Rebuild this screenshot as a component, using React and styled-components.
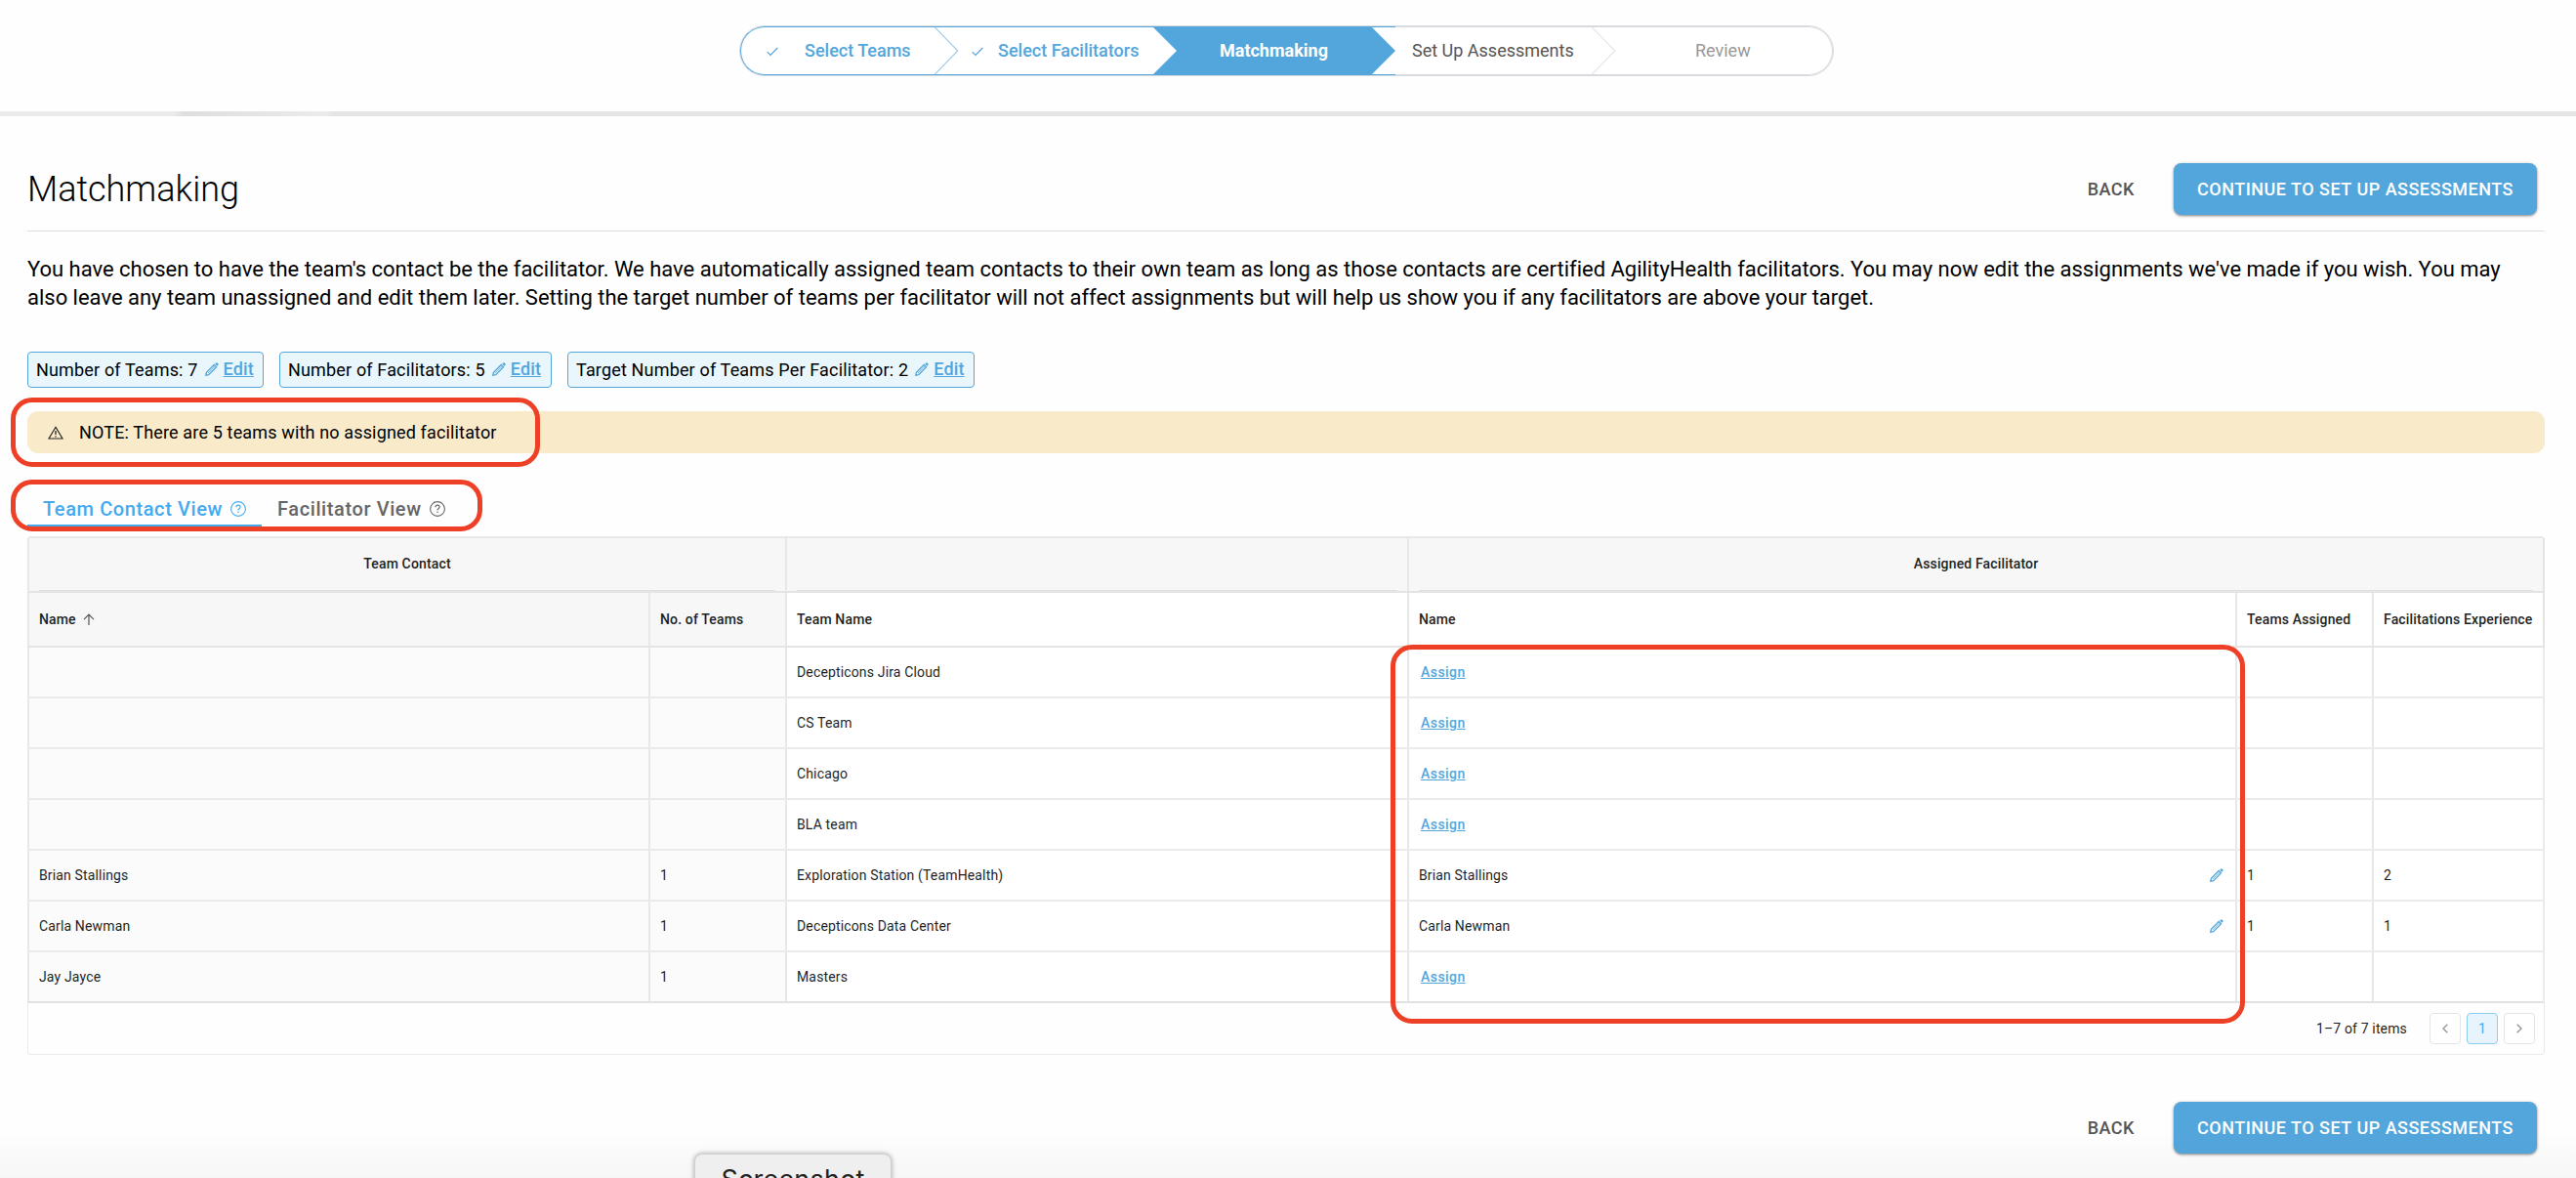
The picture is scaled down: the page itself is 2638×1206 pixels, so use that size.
import React from "react";
import styled, { createGlobalStyle } from "styled-components";

const blue = "#53a6dc";
const red = "#ee4026";

const steps = [
  { label: "Select Teams", state: "done", next: "#fff", width: 223, inset: 65, check: 26 },
  { label: "Select Facilitators", state: "done", next: blue, width: 224, inset: 41, check: 14 },
  { label: "Matchmaking", state: "active", next: "#fff", width: 224, inset: 44 },
  { label: "Set Up Assessments", state: "todo", next: "#fff", width: 225, inset: 17 },
  { label: "Review", state: "last", width: 223, inset: 82 },
];

const chips = [
  { text: "Number of Teams: 7", width: 242, gap: 16 },
  { text: "Number of Facilitators: 5", width: 279, gap: 16 },
  { text: "Target Number of Teams Per Facilitator: 2", width: 417, gap: 0 },
];

const rows = [
  { team: "Decepticons Jira Cloud" },
  { team: "CS Team" },
  { team: "Chicago" },
  { team: "BLA team" },
  {
    contact: "Brian Stallings",
    teams: 1,
    team: "Exploration Station (TeamHealth)",
    facilitator: "Brian Stallings",
    assigned: 1,
    experience: 2,
  },
  {
    contact: "Carla Newman",
    teams: 1,
    team: "Decepticons Data Center",
    facilitator: "Carla Newman",
    assigned: 1,
    experience: 1,
  },
  { contact: "Jay Jayce", teams: 1, team: "Masters" },
];

function Pencil() {
  return (
    <svg width="14" height="14" viewBox="0 0 14 14" fill="none" stroke={blue}>
      <path d="M.8 13.2 1.4 10.3 9.2 2.5 11.5 4.8 3.7 12.6Z" strokeWidth="1.3" />
      <path d="M3 11 9.9 4.1" strokeWidth=".7" />
      <path d="M10.2 1.6 11.4.4Q12 0 12.6.5L13.5 1.4Q14 2 13.5 2.6L12.3 3.8Z" fill={blue} stroke="none" />
    </svg>
  );
}

function Help() {
  return (
    <svg width="16" height="16" viewBox="0 0 16 16" fill="none" stroke="currentColor">
      <circle cx="8" cy="8" r="7.4" strokeWidth="1.1" />
      <path d="M5.9 6.2Q5.9 4.2 8 4.2T10.1 6.1Q10.1 7.1 9 7.8T8 9.5" strokeWidth="1.2" />
      <path d="M8 10.8V12.1" strokeWidth="1.3" />
    </svg>
  );
}

function Check() {
  return (
    <svg width="12" height="10" viewBox="0 0 12 10" fill="none" stroke={blue}>
      <path d="M.7 5.2 4 8.5 11.3 1" strokeWidth="1.2" />
    </svg>
  );
}

function StepEdge({ state, next }) {
  const fill = state === "active" ? blue : "#fff";
  const line = state === "done" ? "#a3cdea" : state === "todo" ? "#e4e6e8" : "none";
  return (
    <Edge width="25" height="48" viewBox="0 0 25 48">
      <path d="M0 0H25V48H0Z" fill={next} />
      <path d="M0 0 24 24 0 48Z" fill={fill} />
      <path d="M.4 0 23.8 24 .4 48" fill="none" stroke={next === blue ? "none" : line} strokeWidth="1.2" />
    </Edge>
  );
}

function Actions() {
  return (
    <ActionGroup>
      <BackButton>BACK</BackButton>
      <ContinueButton>CONTINUE TO SET UP ASSESSMENTS</ContinueButton>
    </ActionGroup>
  );
}

function App() {
  return (
    <Page>
      <GlobalStyle />
      <Header>
        <Stepper>
          {steps.map((s) => (
            <Step key={s.label} $state={s.state} $width={s.width} $inset={s.inset}>
              {s.check && (
                <CheckSlot $left={s.check}>
                  <Check />
                </CheckSlot>
              )}
              <StepLabel>{s.label}</StepLabel>
              {s.next && <StepEdge state={s.state} next={s.next} />}
            </Step>
          ))}
        </Stepper>
      </Header>
      <HeaderLine />

      <Content>
        <TitleRow>
          <Title>Matchmaking</Title>
          <Actions />
        </TitleRow>

        <Intro>
          You have chosen to have the team's contact be the facilitator. We have automatically assigned team contacts to
          their own team as long as those contacts are certified AgilityHealth facilitators. You may now edit the
          assignments we've made if you wish. You may
          <br />
          also leave any team unassigned and edit them later. Setting the target number of teams per facilitator will not
          affect assignments but will help us show you if any facilitators are above your target.
        </Intro>

        <Chips>
          {chips.map((c) => (
            <Chip key={c.text} $width={c.width} $gap={c.gap}>
              <span>{c.text}</span>
              <Pencil />
              <EditLink>Edit</EditLink>
            </Chip>
          ))}
        </Chips>

        <Note>
          <svg width="16" height="14" viewBox="0 0 16 14" fill="none" stroke="#222">
            <path d="M8 1.3 15 13H1Z" strokeWidth="1.2" />
            <path d="M8 5V9M8 10.2V11.6" strokeWidth="1.3" />
          </svg>
          NOTE: There are 5 teams with no assigned facilitator
          <Highlight $left={-17} $top={-14} $width={542} $height={71} />
        </Note>

        <Tabs>
          <Tab $active $width={240}>
            Team Contact View <Help />
          </Tab>
          <Tab $width={200}>
            Facilitator View <Help />
          </Tab>
          <Highlight $left={-17} $top={-9} $width={483} $height={53} />
        </Tabs>

        <Table>
          <GroupRow>
            <GroupCell>
              <span>Team Contact</span>
            </GroupCell>
            <GroupCell>
              <span />
            </GroupCell>
            <GroupCell>
              <span>Assigned Facilitator</span>
            </GroupCell>
          </GroupRow>
          <HeadRow>
            <HeadCell $locked>
              Name
              <svg width="12" height="12" viewBox="0 0 12 12" fill="none" stroke="#555">
                <path d="M6 12V1.2M1 6.2 6 1.2 11 6.2" strokeWidth="1.2" />
              </svg>
            </HeadCell>
            <HeadCell $locked>No. of Teams</HeadCell>
            <HeadCell>Team Name</HeadCell>
            <HeadCell>Name</HeadCell>
            <HeadCell>Teams Assigned</HeadCell>
            <HeadCell>Facilitations Experience</HeadCell>
          </HeadRow>
          {rows.map((r) => (
            <Row key={r.team}>
              <Cell $locked>{r.contact}</Cell>
              <Cell $locked>{r.teams}</Cell>
              <Cell>{r.team}</Cell>
              <Cell $spread>
                {r.facilitator ? (
                  <>
                    {r.facilitator}
                    <Pencil />
                  </>
                ) : (
                  <AssignLink>Assign</AssignLink>
                )}
              </Cell>
              <Cell>{r.assigned}</Cell>
              <Cell>{r.experience}</Cell>
            </Row>
          ))}
          <Pager>
            <PagerInfo>1–7 of 7 items</PagerInfo>
            <PageButton>
              <svg width="6" height="10" viewBox="0 0 6 10" fill="none" stroke="#999">
                <path d="M5.3.7 1 5 5.3 9.3" strokeWidth="1.4" />
              </svg>
            </PageButton>
            <PageButton $active>1</PageButton>
            <PageButton>
              <svg width="6" height="10" viewBox="0 0 6 10" fill="none" stroke="#999">
                <path d="M.7.7 5 5 .7 9.3" strokeWidth="1.4" />
              </svg>
            </PageButton>
          </Pager>
          <Highlight $left={1396} $top={109} $width={875} $height={388} />
        </Table>

        <Bottom>
          <Actions />
        </Bottom>
      </Content>

      <Shade />
      <Tooltip>Screenshot</Tooltip>
    </Page>
  );
}

export default App;

const GlobalStyle = createGlobalStyle`
  * {
    box-sizing: border-box;
  }

  body {
    margin: 0;
    background: #fefefe;
    overflow: hidden;
  }

  svg {
    display: block;
    flex: none;
  }
`;

const Page = styled.div`
  position: relative;
  width: 2638px;
  height: 1206px;
  overflow: hidden;
  font-family: Roboto, "Liberation Sans", sans-serif;
  color: #000;
`;

const Header = styled.header`
  height: 114px;
  padding: 26px 0 0 757px;
`;

const HeaderLine = styled.div`
  height: 5px;
  background: linear-gradient(100deg, #ebebeb 175px, #dedede 185px, #ebebeb 330px, #e5e5e5 336px);
`;

const Stepper = styled.div`
  display: flex;
  width: 1121px;
  height: 52px;
  border: 1px solid #d7dbe0;
  border-radius: 26px;
  background: #fff;
`;

const Step = styled.div`
  position: relative;
  display: flex;
  align-items: center;
  flex: none;
  width: ${(props) => props.$width}px;
  height: 50px;
  padding-left: ${(props) => props.$inset}px;
  padding-bottom: 2px;
  font-size: 18px;
  font-weight: ${(props) => ({ done: 500, active: 700 })[props.$state] || 400};
  color: ${(props) => ({ done: blue, active: "#fff", todo: "#555", last: "#999" })[props.$state]};
  background: ${(props) => (props.$state === "active" ? blue : "transparent")};
  border: solid ${(props) => (["done", "active"].includes(props.$state) ? blue : "#d7dbe0")};
  border-width: 1px 0;

  &:first-child {
    border-left-width: 1px;
    border-radius: 25px 0 0 25px;
  }

  &:last-child {
    border-right-width: 1px;
    border-radius: 0 25px 25px 0;
  }
`;

const StepLabel = styled.span`
  white-space: nowrap;
`;

const CheckSlot = styled.span`
  position: absolute;
  left: ${(props) => props.$left}px;
  top: 20px;
`;

const Edge = styled.svg`
  position: absolute;
  right: -1px;
  top: 0;
`;

const Content = styled.main`
  padding: 0 32px 0 28px;
`;

const TitleRow = styled.div`
  display: flex;
  justify-content: space-between;
  align-items: flex-start;
  height: 118px;
  padding: 48px 8px 0 0;
  border-bottom: 1px solid #dedede;
`;

const Title = styled.h1`
  margin: 0;
  font-size: 36px;
  font-weight: 300;
  line-height: 54px;
`;

const ActionGroup = styled.div`
  display: flex;
  align-items: center;
`;

const BackButton = styled.button`
  border: 0;
  padding: 0;
  margin-right: 40px;
  background: none;
  font: 500 18px Roboto, sans-serif;
  letter-spacing: 0.5px;
  color: #555;
`;

const ContinueButton = styled(BackButton)`
  width: 372px;
  height: 53px;
  margin: 0;
  border-radius: 8px;
  background: ${blue};
  color: #fff;
  box-shadow: 0 1px 3px rgba(0, 0, 0, 0.5);
`;

const Intro = styled.p`
  margin: 24px 0 41px;
  font-size: 22px;
  line-height: 29px;
  letter-spacing: -0.01px;
  white-space: nowrap;
`;

const Chips = styled.div`
  display: flex;
`;

const Chip = styled.div`
  display: flex;
  align-items: center;
  width: ${(props) => props.$width}px;
  height: 37px;
  margin-right: ${(props) => props.$gap}px;
  padding: 0 8px;
  border: 1px solid ${blue};
  border-radius: 4px;
  background: #e9f6fc;
  font-size: 18px;
  letter-spacing: 0.16px;
  white-space: nowrap;

  svg {
    margin: 0 5px 1px 7px;
  }
`;

const EditLink = styled.a`
  position: relative;
  top: -1px;
  font-weight: 500;
  color: ${blue};
  text-decoration: underline;
`;

const Note = styled.div`
  position: relative;
  display: flex;
  align-items: center;
  height: 43px;
  margin-top: 24px;
  padding-left: 21px;
  border-radius: 11px;
  background: #f9ebca;
  font-size: 18px;
  letter-spacing: 0.15px;

  svg {
    margin-right: 16px;
  }
`;

const Highlight = styled.div`
  position: absolute;
  left: ${(props) => props.$left}px;
  top: ${(props) => props.$top}px;
  width: ${(props) => props.$width}px;
  height: ${(props) => props.$height}px;
  border: 5px solid ${red};
  border-radius: 22px;
  pointer-events: none;
`;

const Tabs = styled.div`
  position: relative;
  display: flex;
  height: 41px;
  margin: 36px 0 8px;
`;

const Tab = styled.div`
  display: flex;
  align-items: center;
  gap: 8px;
  width: ${(props) => props.$width}px;
  padding: 5px 0 0 16px;
  font-size: 20px;
  font-weight: 500;
  letter-spacing: 0.6px;
  white-space: nowrap;
  color: ${(props) => (props.$active ? "#43aaf0" : "#666")};
  border-bottom: 4px solid ${(props) => (props.$active ? "#43aaf0" : "transparent")};
`;

const Table = styled.div`
  position: relative;
  border: solid #e8e8e8;
  border-width: 2px 0 0;
  border-radius: 4px 4px 0 0;
  font-size: 14px;
  letter-spacing: 0.15px;
  color: #1f1f1f;
`;

const Row = styled.div`
  display: grid;
  grid-template-columns: 636px 140px 637px 848px 140px 175px;
  height: 52px;
  border-right: 2px solid #ebebeb;
  border-bottom: 2px solid #ebebeb;

  &:nth-last-child(3) {
    border-bottom-color: #e2e2e2;
  }
`;

const HeadRow = styled(Row)`
  height: 56px;
  font-weight: 500;
  border-color: #e4e4e4;
`;

const GroupRow = styled(HeadRow)`
  grid-template-columns: 776px 637px 1163px;
`;

const Cell = styled.div`
  display: flex;
  align-items: center;
  justify-content: ${(props) => (props.$spread ? "space-between" : "flex-start")};
  padding: 0 10px;
  border-left: 2px solid #e8e8e8;
  background: ${(props) => (props.$locked ? "#fbfbfb" : "#fff")};
  white-space: nowrap;

  svg {
    margin-right: 2px;
  }
`;

const HeadCell = styled(Cell)`
  background: ${(props) => (props.$locked ? "#f7f7f7" : "#fff")};

  svg {
    margin: 0 0 0 7px;
  }
`;

const GroupCell = styled(Cell)`
  background: #f7f7f7;

  span {
    flex: 1;
    height: 54px;
    line-height: 53px;
    text-align: center;
    border-bottom: 1px solid #e0e0e0;
  }
`;

const AssignLink = styled.a`
  margin-left: 2px;
  font-weight: 500;
  letter-spacing: 0.45px;
  color: ${blue};
  text-decoration: underline;
`;

const Pager = styled.div`
  display: flex;
  align-items: center;
  justify-content: flex-end;
  gap: 6px;
  height: 53px;
  padding-right: 9px;
  border: 1px solid #ebebeb;
  border-top: 0;
  border-radius: 0 0 4px 4px;
`;

const PagerInfo = styled.span`
  margin-right: 17px;
`;

const PageButton = styled.span`
  display: flex;
  align-items: center;
  justify-content: center;
  width: 32px;
  height: 32px;
  border: 1px solid ${(props) => (props.$active ? "#8ecbf1" : "#e3e3e3")};
  border-radius: 4px;
  background: ${(props) => (props.$active ? "#e8f4fd" : "#fff")};
  color: #43aaf0;
`;

const Bottom = styled.div`
  display: flex;
  justify-content: flex-end;
  padding: 48px 8px 0 0;
`;

const Shade = styled.div`
  position: absolute;
  left: 0;
  right: 0;
  bottom: 0;
  height: 50px;
  background: linear-gradient(rgba(0, 0, 0, 0), rgba(0, 0, 0, 0.03));
`;

const Tooltip = styled.div`
  position: absolute;
  left: 711px;
  top: 1181px;
  width: 202px;
  height: 54px;
  border: 1px solid #d0d0d0;
  border-radius: 8px;
  background: #efefef;
  box-shadow: 0 0 5px rgba(0, 0, 0, 0.35);
  font: 27px/51px Inter, sans-serif;
  letter-spacing: 0.2px;
  text-align: center;
  color: #222;
`;
